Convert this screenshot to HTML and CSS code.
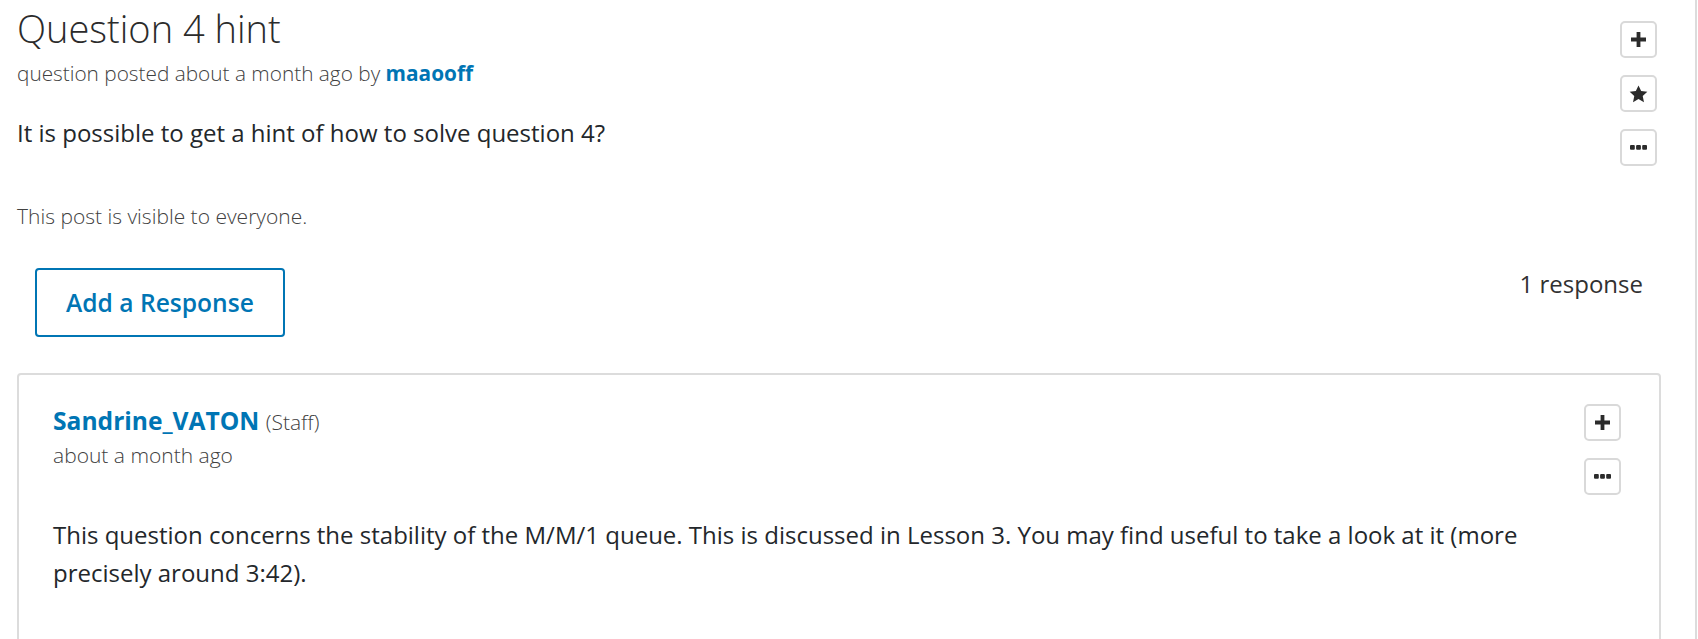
FILE: index.html
```html
<!DOCTYPE html>
<html lang="en">
<head>
<meta charset="utf-8">
<title>Question 4 hint</title>
<link rel="stylesheet" href="styles.css">
</head>
<body>
<div class="page">
  <div class="post">
    <div class="post-main">
      <h1 class="post-title">Question 4 hint</h1>
      <p class="meta">question posted about a month ago by <a class="user" href="#">maaooff</a></p>
      <div class="post-body">It is possible to get a hint of how to solve question 4?</div>
      <p class="visibility">This post is visible to everyone.</p>
    </div>
    <div class="actions">
      <button class="icon-btn" aria-label="Follow">
        <svg width="15" height="15" viewBox="0 0 15 15"><path d="M5.6 0h3.8v5.6H15v3.8H9.4V15H5.6V9.4H0V5.6h5.6z" fill="#2b2b2b"/></svg>
      </button>
      <button class="icon-btn" aria-label="Star">
        <svg width="19" height="18" viewBox="0 0 24 23"><path d="M12 0.5l3.4 7.3 7.9 0.9-5.9 5.4 1.6 7.9L12 18l-7 4 1.6-7.9L0.7 8.7l7.9-0.9z" fill="#2b2b2b"/></svg>
      </button>
      <button class="icon-btn" aria-label="More">
        <svg width="17" height="5" viewBox="0 0 17 5"><rect x="0" y="0" width="4.8" height="4.8" rx="1" fill="#2b2b2b"/><rect x="6.1" y="0" width="4.8" height="4.8" rx="1" fill="#2b2b2b"/><rect x="12.2" y="0" width="4.8" height="4.8" rx="1" fill="#2b2b2b"/></svg>
      </button>
    </div>
  </div>

  <div class="responses-header">
    <button class="add-response">Add a Response</button>
    <span class="response-count">1 response</span>
  </div>

  <div class="response-card">
    <div class="response-main">
      <div class="author"><a class="author-name" href="#">Sandrine_VATON</a> <span class="role">(Staff)</span></div>
      <div class="response-date">about a month ago</div>
      <div class="response-body">This question concerns the stability of the M/M/1 queue. This is discussed in Lesson 3. You may find useful to take a look at it (more precisely around 3:42).</div>
    </div>
    <div class="actions card-actions">
      <button class="icon-btn" aria-label="Endorse">
        <svg width="15" height="15" viewBox="0 0 15 15"><path d="M5.6 0h3.8v5.6H15v3.8H9.4V15H5.6V9.4H0V5.6h5.6z" fill="#2b2b2b"/></svg>
      </button>
      <button class="icon-btn" aria-label="More">
        <svg width="17" height="5" viewBox="0 0 17 5"><rect x="0" y="0" width="4.8" height="4.8" rx="1" fill="#2b2b2b"/><rect x="6.1" y="0" width="4.8" height="4.8" rx="1" fill="#2b2b2b"/><rect x="12.2" y="0" width="4.8" height="4.8" rx="1" fill="#2b2b2b"/></svg>
      </button>
    </div>
  </div>
</div>
</body>
</html>
```

FILE: styles.css
```css
html, body {
  margin: 0;
  padding: 0;
  overflow: hidden;
  background: #fff;
}

body {
  font-family: "Open Sans", "Noto Sans", "Liberation Sans", sans-serif;
  color: #23272b;
}

.page {
  box-sizing: border-box;
  width: 1697px;
  min-height: 100vh;
  padding: 0 34px 0 17px;
  border-right: 2px solid #dcdcdc;
}

.post {
  display: flex;
  justify-content: space-between;
  align-items: flex-start;
  padding-right: 4px;
}

.post-main {
  flex: 1;
}

.post-title {
  margin: 0;
  padding-top: 6px;
  font-size: 38px;
  line-height: 44px;
  font-weight: 300;
  color: #2b2b2b;
}

.meta {
  margin: 8px 0 0;
  font-size: 20.8px;
  line-height: 30px;
  font-weight: 300;
  color: #414141;
}

.user {
  color: #0075b4;
  font-weight: 700;
  text-decoration: none;
}

.post-body {
  margin-top: 27px;
  font-size: 24px;
  line-height: 36px;
  color: #23272b;
}

.visibility {
  margin: 50px 0 0;
  font-size: 21px;
  line-height: 30px;
  font-weight: 300;
  color: #414141;
}

.actions {
  display: flex;
  flex-direction: column;
  gap: 17px;
  padding-top: 21px;
}

.icon-btn {
  box-sizing: border-box;
  width: 37px;
  height: 37px;
  padding: 0;
  display: flex;
  align-items: center;
  justify-content: center;
  background: #fff;
  border: 2px solid #d9d9d9;
  border-radius: 5px;
}

.responses-header {
  display: flex;
  justify-content: space-between;
  align-items: flex-start;
  margin-top: 37px;
  padding: 0 18px;
}

.add-response {
  box-sizing: border-box;
  height: 69px;
  padding: 0 29px;
  background: #fff;
  border: 2px solid #0075b4;
  border-radius: 4px;
  font-family: "Open Sans", "Noto Sans", sans-serif;
  font-size: 24.6px;
  font-weight: 600;
  color: #0075b4;
}

.response-count {
  padding-top: 2px;
  font-size: 24px;
  line-height: 28px;
  color: #313131;
}

.response-card {
  display: flex;
  justify-content: space-between;
  align-items: flex-start;
  margin-top: 36px;
  padding: 28px 38px 120px 34px;
  border: 2px solid #dcdcdc;
  border-radius: 4px;
}

.response-main {
  flex: 1;
  padding-right: 20px;
}

.author {
  font-size: 24.6px;
  line-height: 36px;
}

.author-name {
  color: #0075b4;
  font-weight: 700;
  text-decoration: none;
}

.role {
  font-size: 21px;
  font-weight: 300;
  color: #414141;
}

.response-date {
  font-size: 21px;
  line-height: 30px;
  font-weight: 300;
  color: #414141;
}

.response-body {
  margin-top: 46px;
  font-size: 24px;
  line-height: 38px;
  color: #23272b;
}

.card-actions {
  padding-top: 1px;
}
```
